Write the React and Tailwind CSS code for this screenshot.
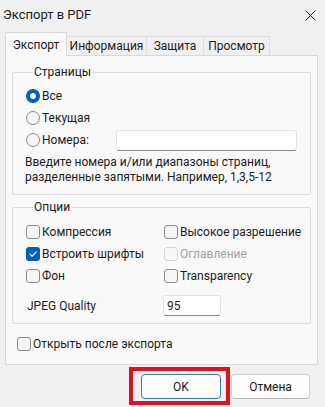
import React from 'react';

const Radio = ({ checked }) =>
  checked ? (
    <span className="w-[14px] h-[14px] rounded-full bg-[#005fb8] flex items-center justify-center shrink-0">
      <span className="w-[6px] h-[6px] rounded-full bg-white" />
    </span>
  ) : (
    <span className="w-[14px] h-[14px] rounded-full border border-[#8a8a8a] bg-[#f6f6f6] shrink-0" />
  );

const Check = ({ checked, disabled }) => {
  if (checked) {
    return (
      <span className="w-[14px] h-[14px] rounded-[3px] bg-[#005fb8] flex items-center justify-center shrink-0">
        <svg width="10" height="10" viewBox="0 0 10 10" fill="none">
          <path d="M2 5.2 L4.1 7.3 L8.2 2.8" stroke="white" strokeWidth="1.1" strokeLinecap="round" strokeLinejoin="round" />
        </svg>
      </span>
    );
  }
  return (
    <span
      className={
        disabled
          ? 'w-[14px] h-[14px] rounded-[3px] border border-[#d6d6d6] bg-[#f9f9f9] shrink-0'
          : 'w-[14px] h-[14px] rounded-[3px] border border-[#8a8a8a] bg-[#f6f6f6] shrink-0'
      }
    />
  );
};

const CheckRow = ({ label, checked, disabled }) => (
  <div className="h-[22px] flex items-center gap-[2px] whitespace-nowrap">
    <Check checked={checked} disabled={disabled} />
    <span className={disabled ? 'text-[#a0a0a0]' : ''}>{label}</span>
  </div>
);

const RadioRow = ({ label, checked }) => (
  <div className="flex items-center gap-[2px] whitespace-nowrap">
    <Radio checked={checked} />
    <span>{label}</span>
  </div>
);

export default function App() {
  return (
    <div
      className="w-[325px] h-[407px] bg-[#f0f0f0] text-[12px] leading-[16px] text-[#1b1b1b] flex flex-col relative overflow-hidden"
      style={{ fontFamily: 'Roboto, "Noto Sans", sans-serif' }}
    >
      {/* title bar */}
      <div className="h-[30px] flex items-center justify-between pl-[3px] pr-[9px] shrink-0">
        <span className="text-[13px]">Экспорт в PDF</span>
        <svg width="11" height="11" viewBox="0 0 11 11">
          <path d="M0.5 0.5 L10.5 10.5 M10.5 0.5 L0.5 10.5" stroke="#1b1b1b" strokeWidth="1" />
        </svg>
      </div>

      {/* tabs */}
      <div className="flex items-start ml-[5px] mt-[2px] h-[23px] relative z-10">
        <div className="w-[62px] h-[24px] bg-[#f9f9f9] border border-b-0 border-[#d9d9d9] rounded-t-[2px] flex items-center justify-center">
          Экспорт
        </div>
        <div className="mt-[4px] w-[80px] h-[19px] border border-l-0 border-b-0 border-[#dedede] bg-[#f0f0f0] flex items-center justify-center">
          Информация
        </div>
        <div className="mt-[4px] w-[57px] h-[19px] border border-l-0 border-b-0 border-[#dedede] bg-[#f0f0f0] flex items-center justify-center">
          Защита
        </div>
        <div className="mt-[4px] w-[66px] h-[19px] border border-l-0 border-b-0 border-[#dedede] bg-[#f0f0f0] flex items-center justify-center">
          Просмотр
        </div>
      </div>

      {/* tab panel */}
      <div className="ml-[5px] w-[313px] h-[310px] bg-[#f9f9f9] border border-[#d9d9d9] flex flex-col px-[6px]">
        <fieldset className="mt-[8px] border border-[#dcdcdc] pl-[13px] pr-[8px] pb-[9px] rounded-[2px]">
          <legend className="ml-[7px] px-[1px]">Страницы</legend>
          <div className="pt-[5px] flex flex-col">
            <div className="h-[22px] flex items-center">
              <RadioRow label="Все" checked />
            </div>
            <div className="h-[22px] flex items-center">
              <RadioRow label="Текущая" />
            </div>
            <div className="h-[22px] flex items-center">
              <div className="w-[90px]">
                <RadioRow label="Номера:" />
              </div>
              <div className="w-[181px] h-[21px] bg-white border border-[#e3e3e3] border-b-[#8a8a8a] rounded-[3px]" />
            </div>
          </div>
          <p className="mt-[4px] -ml-[1px] leading-[15px] whitespace-nowrap">
            Введите номера и/или диапазоны страниц,
            <br />
            разделенные запятыми. Например, 1,3,5-12
          </p>
        </fieldset>

        <fieldset className="mt-[4px] border border-[#dcdcdc] pl-[13px] pr-[8px] pb-[7px] rounded-[2px]">
          <legend className="ml-[7px] px-[1px]">Опции</legend>
          <div className="pt-[6px] grid grid-cols-[138px_1fr]">
            <CheckRow label="Компрессия" />
            <CheckRow label="Высокое разрешение" />
            <CheckRow label="Встроить шрифты" checked />
            <CheckRow label="Оглавление" disabled />
            <CheckRow label="Фон" />
            <CheckRow label="Transparency" />
          </div>
          <div className="mt-[8px] flex items-center">
            <span className="w-[137px] pl-[1px]">JPEG Quality</span>
            <div className="w-[58px] h-[21px] bg-white border border-[#e3e3e3] border-b-[#8a8a8a] rounded-[3px] flex items-center pl-[3px]">
              95
            </div>
          </div>
        </fieldset>

        <div className="mt-[9px] ml-[5px]">
          <CheckRow label="Открыть после экспорта" />
        </div>
      </div>

      {/* buttons */}
      <div className="flex justify-end gap-[10px] pr-[15px] mt-[9px]">
        <button className="w-[80px] h-[25px] bg-[#fdfdfd] border border-[#2f7fd0] rounded-[4px] text-[12px]">
          OK
        </button>
        <button className="w-[79px] h-[25px] bg-[#fdfdfd] border border-[#d0d0d0] border-b-[#b8b8b8] rounded-[4px] text-[12px]">
          Отмена
        </button>
      </div>

      {/* highlight annotation */}
      <div className="absolute left-[129px] top-[367px] w-[101px] h-[38px] border-[4px] border-[#e01020] pointer-events-none" />
    </div>
  );
}
